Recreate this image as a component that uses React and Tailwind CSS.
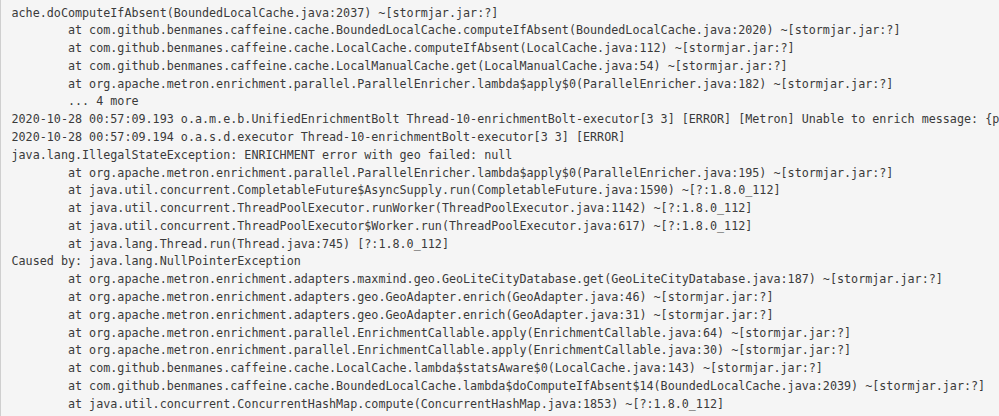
import React from 'react';

const lines = [
  'ache.doComputeIfAbsent(BoundedLocalCache.java:2037) ~[stormjar.jar:?]',
  '\tat com.github.benmanes.caffeine.cache.BoundedLocalCache.computeIfAbsent(BoundedLocalCache.java:2020) ~[stormjar.jar:?]',
  '\tat com.github.benmanes.caffeine.cache.LocalCache.computeIfAbsent(LocalCache.java:112) ~[stormjar.jar:?]',
  '\tat com.github.benmanes.caffeine.cache.LocalManualCache.get(LocalManualCache.java:54) ~[stormjar.jar:?]',
  '\tat org.apache.metron.enrichment.parallel.ParallelEnricher.lambda$apply$0(ParallelEnricher.java:182) ~[stormjar.jar:?]',
  '\t... 4 more',
  '2020-10-28 00:57:09.193 o.a.m.e.b.UnifiedEnrichmentBolt Thread-10-enrichmentBolt-executor[3 3] [ERROR] [Metron] Unable to enrich message: {p',
  '2020-10-28 00:57:09.194 o.a.s.d.executor Thread-10-enrichmentBolt-executor[3 3] [ERROR]',
  'java.lang.IllegalStateException: ENRICHMENT error with geo failed: null',
  '\tat org.apache.metron.enrichment.parallel.ParallelEnricher.lambda$apply$0(ParallelEnricher.java:195) ~[stormjar.jar:?]',
  '\tat java.util.concurrent.CompletableFuture$AsyncSupply.run(CompletableFuture.java:1590) ~[?:1.8.0_112]',
  '\tat java.util.concurrent.ThreadPoolExecutor.runWorker(ThreadPoolExecutor.java:1142) ~[?:1.8.0_112]',
  '\tat java.util.concurrent.ThreadPoolExecutor$Worker.run(ThreadPoolExecutor.java:617) ~[?:1.8.0_112]',
  '\tat java.lang.Thread.run(Thread.java:745) [?:1.8.0_112]',
  'Caused by: java.lang.NullPointerException',
  '\tat org.apache.metron.enrichment.adapters.maxmind.geo.GeoLiteCityDatabase.get(GeoLiteCityDatabase.java:187) ~[stormjar.jar:?]',
  '\tat org.apache.metron.enrichment.adapters.geo.GeoAdapter.enrich(GeoAdapter.java:46) ~[stormjar.jar:?]',
  '\tat org.apache.metron.enrichment.adapters.geo.GeoAdapter.enrich(GeoAdapter.java:31) ~[stormjar.jar:?]',
  '\tat org.apache.metron.enrichment.parallel.EnrichmentCallable.apply(EnrichmentCallable.java:64) ~[stormjar.jar:?]',
  '\tat org.apache.metron.enrichment.parallel.EnrichmentCallable.apply(EnrichmentCallable.java:30) ~[stormjar.jar:?]',
  '\tat com.github.benmanes.caffeine.cache.LocalCache.lambda$statsAware$0(LocalCache.java:143) ~[stormjar.jar:?]',
  '\tat com.github.benmanes.caffeine.cache.BoundedLocalCache.lambda$doComputeIfAbsent$14(BoundedLocalCache.java:2039) ~[stormjar.jar:?]',
  '\tat java.util.concurrent.ConcurrentHashMap.compute(ConcurrentHashMap.java:1853) ~[?:1.8.0_112]',
];

const App = () => {
  return (
    <div className="w-[999px] h-[416px] overflow-hidden bg-[#f5f5f5] border-l border-[#cfcfcf]">
      <pre
        className="m-0 pt-[4.5px] pl-[10.5px] whitespace-pre text-[11.73px] leading-[17.78px] text-[#3a3a3a] [tab-size:8]"
        style={{ fontFamily: '"DejaVu Sans Mono", "Liberation Mono", monospace' }}
      >
        {lines.map((line, i) => (
          <div key={i}>{line}</div>
        ))}
      </pre>
    </div>
  );
};

export default App;
